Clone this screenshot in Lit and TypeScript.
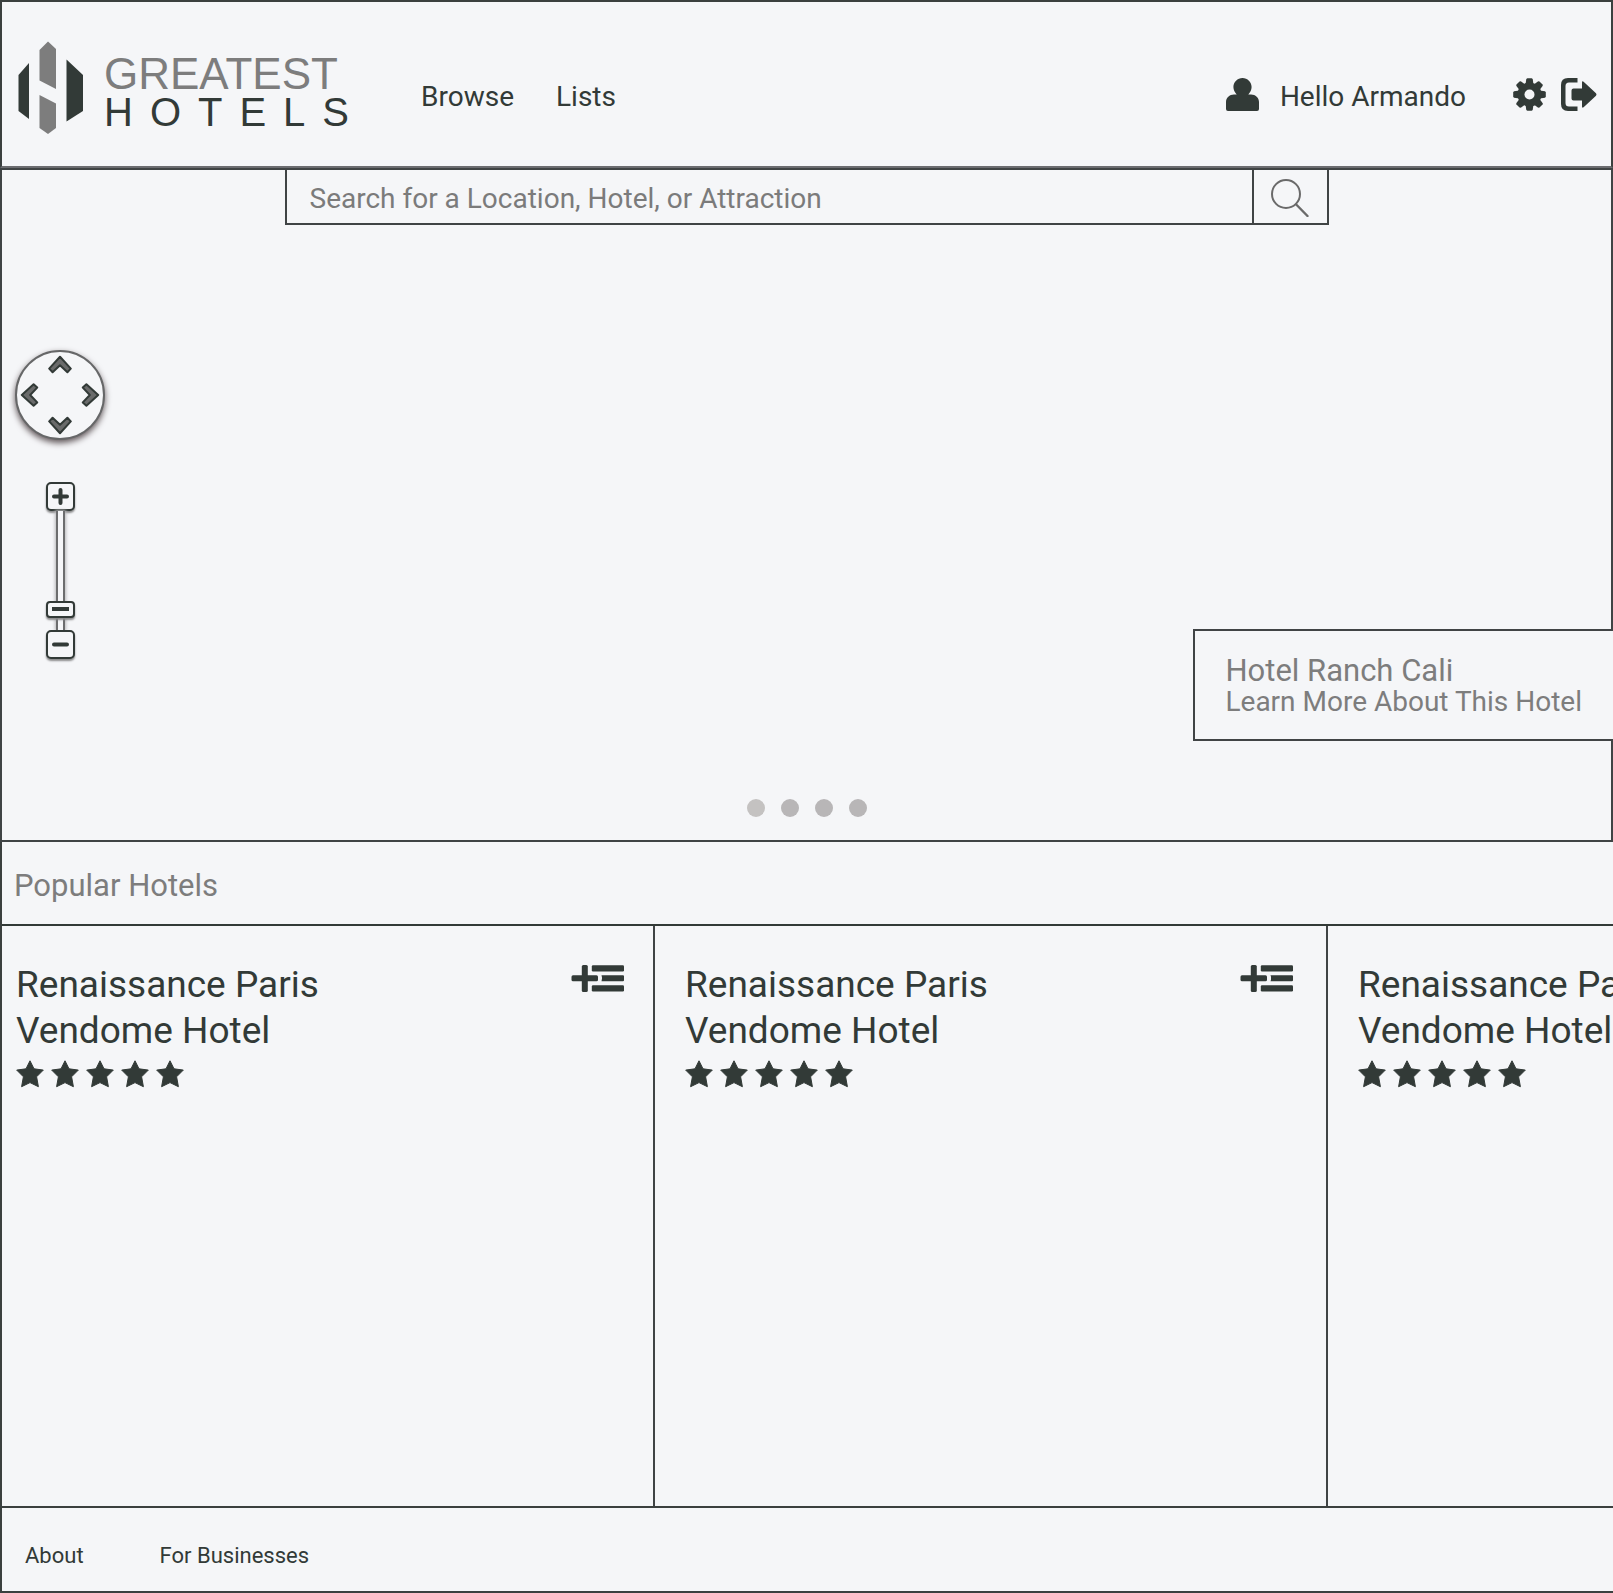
import { LitElement, html, svg, css } from "lit";
import { customElement, property, state } from "lit/decorators.js";

const logoMark = html`<svg class="mark" viewBox="0 0 66 94" aria-hidden="true">
  <g fill="#323a37">
    <path d="M11 22V78L0.5 70V34Z" />
    <path d="M48.5 18.5L65 34V70L48.5 80.5Z" />
  </g>
  <g fill="#7d7d7d">
    <path d="M30 0.5L38 8V48L21.5 39.5V9Z" />
    <path d="M21.5 54L38 62.5V87L30 93L21.5 87Z" />
  </g>
</svg>`;

const userIcon = html`<svg class="icon" width="33" height="33" viewBox="0 0 33 33" aria-hidden="true">
  <path
    d="M16.5 0C21.5 0 25.6 4 25.6 9C25.6 12 24.3 14.2 22.3 16.4H25C29.5 16.4 33 19.6 33 24V31Q33 33 31 33H2Q0 33 0 31V24C0 19.6 3.500 16.400 8 16.400H10.700C8.700 14.200 7.400 12 7.400 9C7.400 4 11.500 0 16.500 0Z"
  />
</svg>`;

const gearIcon = html`<svg class="icon" width="33" height="33" viewBox="-16.500 -16.500 33 33" aria-hidden="true">
  ${[0, 45, 90, 135].map(
    (a) => svg`<path transform="rotate(${a})" d="M-2.200 -16.300H2.200L3.200 -15.500L4 -10V10L3.200 15.500L2.200 16.300H-2.200L-3.200 15.500L-4 10V-10L-3.200 -15.500Z" />`
  )}
  <circle r="12" />
  <circle class="hole" r="5" />
</svg>`;

const exitIcon = html`<svg class="icon" width="36" height="33" viewBox="0 0 36 33" aria-hidden="true">
  <path d="M16.500 0V4.500H8Q4.500 4.500 4.500 8V25Q4.500 28.500 8 28.500H16.500V33H7Q0 33 0 26V7Q0 0 7 0Z" />
  <path
    d="M12.500 10.500H21V4.500Q21 2.600 22.600 3.800L35 15.300Q36 16.500 35 17.700L22.600 29.200Q21 30.400 21 28.500V22.500H12.500Q10.500 22.500 10.500 20.500V12.500Q10.500 10.500 12.500 10.500Z"
  />
</svg>`;

const searchIcon = html`<svg width="38" height="38" viewBox="0 0 38 38" fill="none" stroke="#6a6a6a" stroke-width="2" stroke-linecap="round" aria-hidden="true">
  <circle cx="15" cy="15" r="14" />
  <path d="M25.200 25.500L36.500 37" stroke-width="2.400" />
</svg>`;

const addIcon = html`<svg width="53" height="27" viewBox="0 0 53 27" fill="#323a37" aria-hidden="true">
  <rect x="0.500" y="10.300" width="26.500" height="6" rx="1.500" />
  <rect x="10.800" y="0" width="6" height="27" rx="1.500" />
  <rect x="20.800" y="0.300" width="32.200" height="6.200" rx="1.200" />
  <path d="M30.500 10.300H52Q53 10.300 53 11.300V15.300Q53 16.300 52 16.300H30.500Q31.800 13.300 30.500 10.300Z" />
  <rect x="20.800" y="20.300" width="32.200" height="6.200" rx="1.200" />
</svg>`;

const starIcon = svg`<svg width="28" height="28" viewBox="0 0 28 28" fill="#323a37" stroke="#323a37" stroke-width="1" stroke-linejoin="round" aria-hidden="true">
  <path d="M14 0.800L18 8.800L27.300 10.100L20.600 16.800L22.400 26.700L14 22.600L5.600 26.700L7.400 16.800L0.700 10.100L10 8.800Z" />
</svg>`;

const chevron = (turn: number) => html`<svg width="24" height="24" viewBox="-12 -12 24 24" aria-hidden="true">
  <path
    transform="rotate(${turn})"
    d="M0 -8.200L10.800 3.600L7.400 7.200L0 0.200L-7.400 7.200L-10.800 3.600Z"
    fill="#6a6b6b" stroke="#323a37" stroke-width="2" stroke-linejoin="round"
  />
</svg>`;

@customElement("site-header")
export class SiteHeader extends LitElement {
  @property() user = "";

  static styles = css`
    :host {
      display: block;
      border: 2px solid #3b403f;
      border-bottom-color: #6c6d70;
    }
    header {
      display: flex;
      align-items: flex-start;
      padding: 39px 14px 31px 16px;
    }
    a {
      color: inherit;
      text-decoration: none;
    }
    .logo {
      display: flex;
    }
    .mark {
      width: 66px;
      height: 94px;
    }
    .words {
      display: flex;
      flex-direction: column;
      margin-left: 20px;
      padding-top: 14px;
      font-family: "Liberation Sans", sans-serif;
      line-height: 38px;
    }
    .first {
      font-size: 44px;
      color: #7d7d7d;
    }
    .second {
      font-size: 40px;
      letter-spacing: 17px;
      margin-right: -17px;
    }
    nav,
    .account {
      display: flex;
      align-items: center;
      height: 33px;
      margin-top: 37px;
      font-size: 28px;
      line-height: 30px;
    }
    nav {
      gap: 42px;
      margin-left: 72px;
    }
    nav a,
    .hello {
      padding-top: 5px;
    }
    .account {
      margin-left: auto;
    }
    .hello {
      margin: 0 47px 0 21px;
    }
    button {
      display: flex;
      padding: 0;
      border: 0;
      background: none;
      cursor: pointer;
    }
    .exit {
      margin-left: 15px;
    }
    .icon {
      display: block;
      fill: #323a37;
    }
    .hole {
      fill: #f5f6f8;
    }
  `;

  render() {
    return html`<header>
      <a class="logo" href="#home" aria-label="Greatest Hotels">
        ${logoMark}
        <span class="words"><span class="first">GREATEST</span><span class="second">HOTELS</span></span>
      </a>
      <nav>
        <a href="#browse">Browse</a>
        <a href="#lists">Lists</a>
      </nav>
      <div class="account">
        ${userIcon}
        <span class="hello">Hello ${this.user}</span>
        <button aria-label="Settings">${gearIcon}</button>
        <button class="exit" aria-label="Sign out">${exitIcon}</button>
      </div>
    </header>`;
  }
}

@customElement("map-controls")
export class MapControls extends LitElement {
  @state() private zoom = 12;

  static styles = css`
    :host {
      display: flex;
      flex-direction: column;
      align-items: center;
      width: 90px;
    }
    button {
      display: grid;
      place-items: center;
      padding: 0;
      border: 0;
      background: none;
      cursor: pointer;
    }
    .compass {
      box-sizing: border-box;
      display: grid;
      grid-template-columns: 24px 24px 24px;
      grid-template-rows: 24px 24px 24px;
      justify-content: space-between;
      align-content: space-between;
      width: 90px;
      height: 90px;
      padding: 1px;
      border: 2px solid #666768;
      border-radius: 50%;
      background: #f5f6f8;
      box-shadow: 0 3px 6px #5f5558;
    }
    .up {
      grid-area: 1 / 2;
    }
    .left {
      grid-area: 2 / 1;
    }
    .right {
      grid-area: 2 / 3;
    }
    .down {
      grid-area: 3 / 2;
    }
    .zoom {
      display: flex;
      flex-direction: column;
      align-items: center;
      margin-top: 42px;
    }
    .step {
      box-sizing: border-box;
      width: 29px;
      height: 29px;
      border: 2px solid #323a37;
      border-radius: 5px;
      background: #f5f6f8;
      box-shadow: 0 2px 2px #8b8b8c;
    }
    .slider {
      appearance: none;
      writing-mode: vertical-lr;
      direction: rtl;
      width: 29px;
      height: 119px;
      margin: 0;
      background: none;
    }
    .slider::-webkit-slider-runnable-track {
      box-sizing: border-box;
      width: 9px;
      height: 119px;
      border: solid #6c6d6e;
      border-width: 0 2px;
      background: #f5f6f8;
      box-shadow: 0 0 3px 1px #b9b9ba;
    }
    .slider::-webkit-slider-thumb {
      appearance: none;
      box-sizing: border-box;
      width: 29px;
      height: 17px;
      margin-left: -12px;
      border: 2px solid #323a37;
      border-radius: 4px;
      background: linear-gradient(#323a37, #323a37) center / 17px 4px no-repeat #f5f6f8;
      box-shadow: 0 2px 2px #8b8b8c;
    }
  `;

  private nudge(by: number) {
    this.zoom = Math.max(0, Math.min(100, this.zoom + by));
  }

  render() {
    return html`<div class="compass">
        <button class="up" aria-label="Pan up">${chevron(0)}</button>
        <button class="left" aria-label="Pan left">${chevron(-90)}</button>
        <button class="right" aria-label="Pan right">${chevron(90)}</button>
        <button class="down" aria-label="Pan down">${chevron(180)}</button>
      </div>
      <div class="zoom">
        <button class="step" aria-label="Zoom in" @click=${() => this.nudge(8)}>
          <svg width="17" height="17" viewBox="0 0 17 17" stroke="#323a37" stroke-width="4" stroke-linecap="round" aria-hidden="true">
            <path d="M8.500 2V15M2 8.500H15" />
          </svg>
        </button>
        <input
          class="slider"
          type="range"
          min="0"
          max="100"
          aria-label="Zoom level"
          .value=${String(this.zoom)}
          @input=${(e: Event) => (this.zoom = Number((e.target as HTMLInputElement).value))}
        />
        <button class="step" aria-label="Zoom out" @click=${() => this.nudge(-8)}>
          <svg width="17" height="17" viewBox="0 0 17 17" stroke="#323a37" stroke-width="4" stroke-linecap="round" aria-hidden="true">
            <path d="M2 8.500H15" />
          </svg>
        </button>
      </div>`;
  }
}

@customElement("hero-map")
export class HeroMap extends LitElement {
  @state() private slide = 0;

  static styles = css`
    :host {
      position: relative;
      box-sizing: border-box;
      display: flex;
      flex-direction: column;
      min-height: 674px;
      border: 2px solid #404445;
    }
    .search {
      box-sizing: border-box;
      display: flex;
      align-self: center;
      width: 100%;
      max-width: 1044px;
      height: 55px;
      border: solid #404445;
      border-width: 0 2px 2px;
    }
    .query {
      flex: 1;
      min-width: 0;
      padding: 4px 24px 0 23px;
      border: 0;
      outline: 0;
      background: none;
      color: #323a37;
      font: inherit;
      font-size: 28px;
    }
    .query::placeholder {
      color: #7b7b7b;
      opacity: 1;
    }
    .go {
      box-sizing: border-box;
      display: grid;
      place-items: center;
      width: 75px;
      padding: 3px 0 0;
      border: 0;
      border-left: 2px solid #404445;
      background: none;
      cursor: pointer;
    }
    map-controls {
      position: absolute;
      top: 180px;
      left: 13px;
    }
    .promo {
      position: absolute;
      right: -2px;
      bottom: 99px;
      padding: 24px 31px 22px 30px;
      border: 2px solid #404445;
      border-right: 0;
      background: #f5f6f8;
      color: #7d7d7d;
      font-size: 28px;
      line-height: 31px;
      text-decoration: none;
    }
    .promo span {
      display: block;
    }
    .name {
      font-size: 31px;
    }
    .dots {
      display: flex;
      align-self: center;
      gap: 16px;
      margin-top: auto;
      padding-bottom: 23px;
    }
    .dot {
      width: 18px;
      height: 18px;
      padding: 0;
      border: 0;
      border-radius: 50%;
      background: #b8b6b7;
      cursor: pointer;
    }
    .dot[aria-pressed="true"] {
      background: #c4c2c1;
    }
  `;

  render() {
    return html`<form class="search" role="search" @submit=${(e: Event) => e.preventDefault()}>
        <input class="query" type="text" aria-label="Search" placeholder="Search for a Location, Hotel, or Attraction" />
        <button class="go" aria-label="Search">${searchIcon}</button>
      </form>
      <map-controls></map-controls>
      <a class="promo" href="#ranch-cali">
        <span class="name">Hotel Ranch Cali</span>
        <span>Learn More About This Hotel</span>
      </a>
      <div class="dots">
        ${[0, 1, 2, 3].map(
          (i) => html`<button
            class="dot"
            aria-label="Slide ${i + 1}"
            aria-pressed=${i === this.slide ? "true" : "false"}
            @click=${() => (this.slide = i)}
          ></button>`
        )}
      </div>`;
  }
}

@customElement("hotel-card")
export class HotelCard extends LitElement {
  @property() name = "";
  @property({ type: Number }) stars = 0;

  static styles = css`
    :host {
      display: block;
      width: 608px;
    }
    .top {
      display: flex;
      justify-content: space-between;
      align-items: flex-start;
    }
    h3 {
      max-width: 340px;
      margin: 0;
      padding-top: 3px;
      font-size: 37px;
      font-weight: 400;
      line-height: 46px;
    }
    .add {
      display: flex;
      margin-top: 6px;
      padding: 0;
      border: 0;
      background: none;
      cursor: pointer;
    }
    .stars {
      display: flex;
      gap: 7px;
      margin-top: 6px;
    }
  `;

  render() {
    return html`<div class="top">
        <h3>${this.name}</h3>
        <button class="add" aria-label="Add to list">${addIcon}</button>
      </div>
      <div class="stars" role="img" aria-label="${this.stars} stars">
        ${Array.from({ length: this.stars }, () => starIcon)}
      </div>`;
  }
}

@customElement("app-root")
export class AppRoot extends LitElement {
  private hotels = [1, 2, 3].map(() => ({ name: "Renaissance Paris Vendome Hotel", stars: 5 }));

  static styles = css`
    :host {
      display: flex;
      flex-direction: column;
      min-height: 100vh;
      background: #f5f6f8;
      color: #323a37;
      font-family: Roboto, "Liberation Sans", sans-serif;
    }
    .popular {
      display: flex;
      flex: 1;
      flex-direction: column;
      border-left: 2px solid #3b403f;
    }
    h2 {
      margin: 0;
      padding: 6px 12px 0;
      border-bottom: 2px solid #323a37;
      color: #7d7d7d;
      font-size: 31px;
      font-weight: 400;
      line-height: 76px;
    }
    .row {
      display: flex;
      flex: 1;
      margin: 0;
      padding: 0;
      overflow: hidden;
      list-style: none;
    }
    .cell {
      flex: none;
      padding: 33px 33px 60px 30px;
      border-right: 2px solid #404445;
    }
    .cell:first-child {
      padding-right: 29px;
      padding-left: 14px;
    }
    footer {
      display: flex;
      gap: 76px;
      padding: 13px 23px 0;
      border: 2px solid #3b403f;
      border-right: 0;
      font-size: 22px;
      line-height: 70px;
    }
    footer a {
      color: inherit;
      text-decoration: none;
    }
  `;

  render() {
    return html`<site-header user="Armando"></site-header>
      <hero-map></hero-map>
      <section class="popular">
        <h2>Popular Hotels</h2>
        <ul class="row">
          ${this.hotels.map(
            (h) => html`<li class="cell"><hotel-card name=${h.name} stars=${h.stars}></hotel-card></li>`
          )}
        </ul>
      </section>
      <footer>
        <a href="#about">About</a>
        <a href="#business">For Businesses</a>
      </footer>`;
  }
}
